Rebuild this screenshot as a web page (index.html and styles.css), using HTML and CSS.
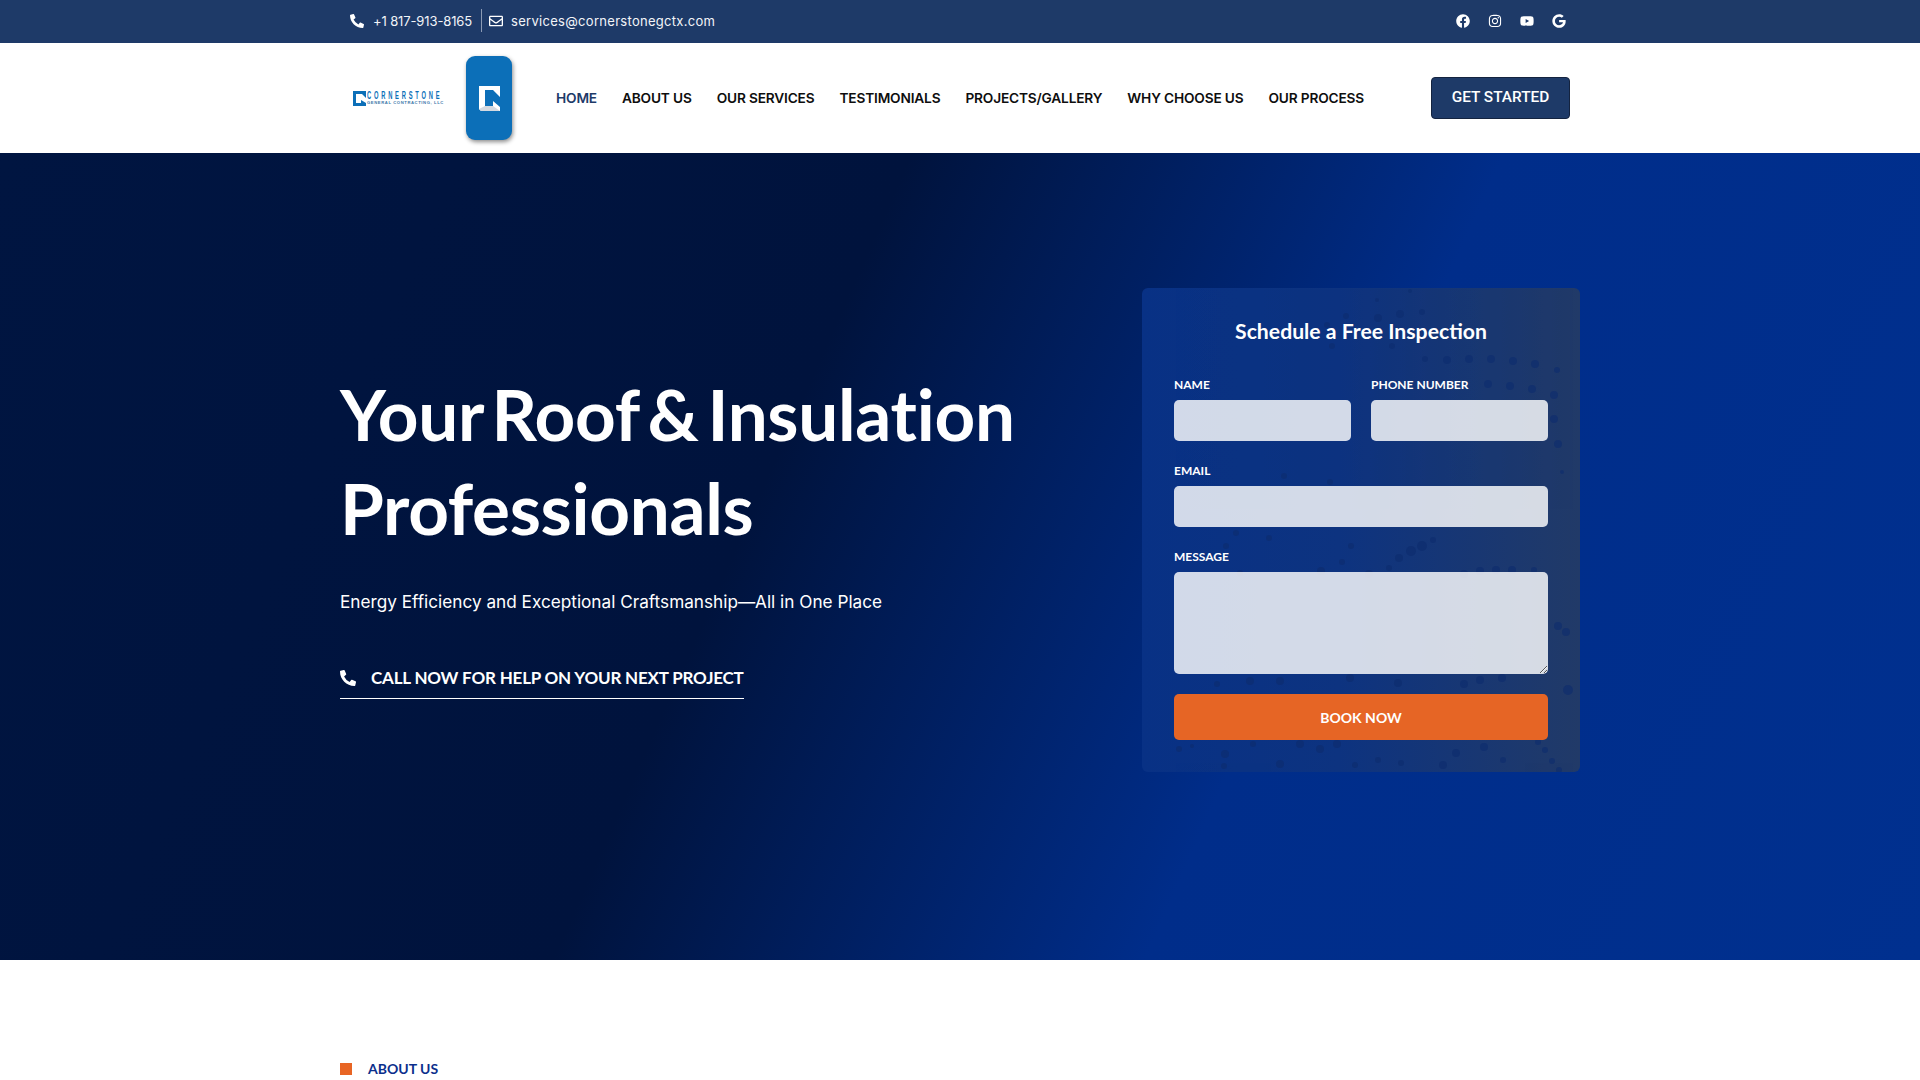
FILE: index.html
```html
<!DOCTYPE html>
<html lang="en">
<head>
  <meta charset="UTF-8" />
  <meta name="viewport" content="width=device-width, initial-scale=1.0" />
  <title>Cornerstone General Contracting</title>
  <link rel="stylesheet" href="styles.css">
</head>
<body>

  <!-- top bar -->
  <div class="topbar">
    <div class="topbar-in">
      <div class="contact">
        <a class="contact-item item-phone" href="#">
          <svg class="ic-phone" viewBox="0 0 512 512"><path d="M497.39 361.8l-112-48a24 24 0 0 0-28 6.9l-49.6 60.6A370.66 370.66 0 0 1 130.6 204.11l60.6-49.6a23.94 23.94 0 0 0 6.9-28l-48-112A24.16 24.16 0 0 0 122.6.61l-104 24A24 24 0 0 0 0 48c0 256.5 207.9 464 464 464a24 24 0 0 0 23.4-18.6l24-104a24.29 24.29 0 0 0-14.01-27.6z"/></svg>
          +1 817-913-8165
        </a>
        <span class="divider"></span>
        <a class="contact-item item-mail" href="#">
          <svg class="ic-mail" viewBox="0 0 512 512"><path d="M464 64H48C21.49 64 0 85.49 0 112v288c0 26.51 21.49 48 48 48h416c26.51 0 48-21.49 48-48V112c0-26.51-21.49-48-48-48zm0 48v40.805c-22.422 18.259-58.168 46.651-134.587 106.49-16.841 13.247-50.201 45.072-73.413 44.701-23.208.375-56.579-31.459-73.413-44.701C106.18 199.465 70.425 171.067 48 152.805V112h416zM48 400V214.398c22.914 18.251 55.409 43.862 104.938 82.646 21.857 17.205 60.134 55.186 103.062 54.955 42.717.231 80.509-37.199 103.053-54.947 49.528-38.783 82.032-64.401 104.947-82.653V400H48z"/></svg>
          services@cornerstonegctx.com
        </a>
      </div>
      <div class="socials">
        <svg viewBox="0 0 512 512"><path d="M504 256C504 119 393 8 256 8S8 119 8 256c0 123.78 90.69 226.38 209.25 245V327.69h-63V256h63v-54.64c0-62.15 37-96.48 93.67-96.48 27.14 0 55.52 4.84 55.52 4.84v61h-31.28c-30.8 0-40.41 19.12-40.41 38.73V256h68.78l-11 71.69h-57.78V501C413.31 482.38 504 379.78 504 256z"/></svg>
        <svg viewBox="0 0 448 512"><path d="M224.1 141c-63.6 0-114.9 51.3-114.9 114.9s51.3 114.9 114.9 114.9S339 319.5 339 255.9 287.7 141 224.1 141zm0 189.6c-41.1 0-74.7-33.5-74.7-74.7s33.5-74.7 74.7-74.7 74.7 33.5 74.7 74.7-33.6 74.7-74.7 74.7zm146.4-194.3c0 14.9-12 26.8-26.8 26.8-14.9 0-26.8-12-26.8-26.8s12-26.8 26.8-26.8 26.8 12 26.8 26.8zm76.1 27.2c-1.7-35.9-9.9-67.7-36.2-93.9-26.2-26.2-58-34.4-93.9-36.2-37-2.1-147.9-2.1-184.9 0-35.8 1.7-67.6 9.9-93.9 36.1s-34.4 58-36.2 93.9c-2.1 37-2.1 147.9 0 184.9 1.7 35.9 9.9 67.7 36.2 93.9s58 34.4 93.9 36.2c37 2.1 147.9 2.1 184.9 0 35.9-1.7 67.7-9.9 93.9-36.2 26.2-26.2 34.4-58 36.2-93.9 2.1-37 2.1-147.8 0-184.8zM398.8 388c-7.8 19.6-22.9 34.7-42.6 42.6-29.5 11.7-99.5 9-132.1 9s-102.7 2.6-132.1-9c-19.6-7.8-34.7-22.9-42.6-42.6-11.7-29.5-9-99.5-9-132.1s-2.6-102.7 9-132.1c7.8-19.6 22.9-34.7 42.6-42.6 29.5-11.7 99.5-9 132.1-9s102.7-2.6 132.1 9c19.6 7.8 34.7 22.9 42.6 42.6 11.7 29.5 9 99.5 9 132.1s2.7 102.7-9 132.1z"/></svg>
        <svg viewBox="0 0 576 512"><path d="M549.655 124.083c-6.281-23.65-24.787-42.276-48.284-48.597C458.781 64 288 64 288 64S117.22 64 74.629 75.486c-23.497 6.322-42.003 24.947-48.284 48.597-11.412 42.867-11.412 132.305-11.412 132.305s0 89.438 11.412 132.305c6.281 23.65 24.787 41.5 48.284 47.821C117.22 448 288 448 288 448s170.78 0 213.371-11.486c23.497-6.321 42.003-24.171 48.284-47.821 11.412-42.867 11.412-132.305 11.412-132.305s0-89.438-11.412-132.305zm-317.51 213.508V175.185l142.739 81.205-142.739 81.201z"/></svg>
        <svg viewBox="0 0 488 512"><path d="M488 261.8C488 403.3 391.1 504 248 504 110.8 504 0 393.2 0 256S110.8 8 248 8c66.8 0 123 24.5 166.3 64.9l-67.5 64.9C258.5 52.6 94.3 116.6 94.3 256c0 86.5 69.1 156.6 153.7 156.6 98.2 0 135-70.4 140.8-106.9H248v-85.3h236.1c2.3 12.7 3.9 24.9 3.9 41.4z"/></svg>
      </div>
    </div>
  </div>

  <!-- header -->
  <header class="header">
    <div class="header-in">
      <a class="logo" href="#">
        <svg class="logo-mark" viewBox="0 0 13 15"><path d="M0 0H13V7L9 3H3V12H8V9L13 12V15H0Z" fill="#0c6fb8"/></svg>
        <span class="logo-words">
          <span class="logo-name">CORNERSTONE</span>
          <span class="logo-sub">GENERAL CONTRACTING, LLC</span>
        </span>
      </a>
      <div class="app-tile">
        <svg viewBox="0 0 21 25"><path d="M0 0H21V11L14 4H6V20H14V15L21 21V25H2L0 23Z" fill="#fff"/><path d="M0 23L6 20H14L21 25H2Z" fill="#d4d9e0"/></svg>
      </div>
      <nav class="nav">
        <a class="active" href="#">HOME</a>
        <a href="#">ABOUT US</a>
        <a href="#">OUR SERVICES</a>
        <a href="#">TESTIMONIALS</a>
        <a href="#">PROJECTS/GALLERY</a>
        <a href="#">WHY CHOOSE US</a>
        <a href="#">OUR PROCESS</a>
      </nav>
      <a class="btn-start" href="#">GET STARTED</a>
    </div>
  </header>

  <!-- hero -->
  <section class="hero">
    <div class="hero-in">
      <div class="hero-left">
        <h1>Your Roof &amp; Insulation Professionals</h1>
        <p>Energy Efficiency and Exceptional Craftsmanship—All in One Place</p>
        <a class="call" href="#">
          <svg viewBox="0 0 512 512"><path d="M497.39 361.8l-112-48a24 24 0 0 0-28 6.9l-49.6 60.6A370.66 370.66 0 0 1 130.6 204.11l60.6-49.6a23.94 23.94 0 0 0 6.9-28l-48-112A24.16 24.16 0 0 0 122.6.61l-104 24A24 24 0 0 0 0 48c0 256.5 207.9 464 464 464a24 24 0 0 0 23.4-18.6l24-104a24.29 24.29 0 0 0-14.01-27.6z"/></svg>
          CALL NOW FOR HELP ON YOUR NEXT PROJECT
        </a>
      </div>

      <form class="quote">
        <!-- speckle behind the fields -->
        <svg class="speckle" viewBox="0 0 438 484" fill="#0d2c6e">
          <circle cx="204" cy="28" r="3"/><circle cx="235" cy="12" r="2"/><circle cx="268" cy="3" r="2"/>
          <circle cx="236" cy="30" r="4"/><circle cx="258" cy="26" r="4"/><circle cx="280" cy="24" r="3"/>
          <circle cx="185" cy="37" r="3"/><circle cx="190" cy="58" r="3"/><circle cx="250" cy="58" r="3"/>
          <circle cx="283" cy="71" r="3"/><circle cx="305" cy="72" r="4"/><circle cx="327" cy="71" r="4"/>
          <circle cx="349" cy="71" r="4"/><circle cx="371" cy="73" r="4"/><circle cx="393" cy="76" r="4"/>
          <circle cx="415" cy="82" r="3"/><circle cx="346" cy="96" r="4"/><circle cx="368" cy="98" r="4"/>
          <circle cx="390" cy="101" r="4"/><circle cx="412" cy="107" r="4"/><circle cx="412" cy="131" r="4"/>
          <circle cx="416" cy="156" r="4"/><circle cx="420" cy="184" r="2"/><circle cx="142" cy="188" r="3"/>
          <circle cx="188" cy="194" r="3"/><circle cx="94" cy="245" r="3"/><circle cx="127" cy="250" r="3"/>
          <circle cx="84" cy="258" r="3"/><circle cx="209" cy="258" r="3"/><circle cx="257" cy="270" r="4"/>
          <circle cx="269" cy="263" r="5"/><circle cx="280" cy="258" r="5"/><circle cx="291" cy="252" r="3"/>
          <circle cx="200" cy="274" r="3"/><circle cx="247" cy="280" r="3"/><circle cx="98" cy="285" r="3"/>
          <circle cx="179" cy="283" r="4"/><circle cx="227" cy="286" r="4"/><circle cx="322" cy="286" r="4"/>
          <circle cx="338" cy="283" r="4"/><circle cx="354" cy="282" r="4"/><circle cx="370" cy="282" r="4"/>
          <circle cx="392" cy="282" r="3"/>
          <circle cx="416" cy="338" r="4"/><circle cx="424" cy="344" r="4"/><circle cx="426" cy="402" r="5"/>
          <circle cx="75" cy="396" r="3"/><circle cx="108" cy="393" r="4"/><circle cx="138" cy="393" r="4"/>
          <circle cx="208" cy="390" r="4"/><circle cx="256" cy="395" r="4"/><circle cx="322" cy="396" r="4"/>
          <circle cx="338" cy="392" r="4"/><circle cx="360" cy="390" r="4"/>
          <circle cx="37" cy="461" r="3"/><circle cx="50" cy="458" r="2"/><circle cx="82" cy="478" r="3"/>
          <circle cx="83" cy="466" r="4"/><circle cx="111" cy="456" r="3"/>
          <circle cx="138" cy="476" r="4"/><circle cx="158" cy="456" r="4"/><circle cx="178" cy="461" r="4"/>
          <circle cx="195" cy="456" r="4"/><circle cx="213" cy="477" r="3"/><circle cx="236" cy="472" r="3"/>
          <circle cx="259" cy="475" r="3"/><circle cx="301" cy="477" r="4"/><circle cx="314" cy="465" r="4"/>
          <circle cx="342" cy="459" r="4"/><circle cx="361" cy="472" r="3"/><circle cx="396" cy="454" r="3"/>
          <circle cx="403" cy="462" r="3"/><circle cx="410" cy="473" r="3"/><circle cx="417" cy="482" r="3"/>
        </svg>
        <h3>Schedule a Free Inspection</h3>
        <div class="row-2">
          <label class="field">NAME<input type="text"></label>
          <label class="field">PHONE NUMBER<input type="tel"></label>
        </div>
        <label class="field">EMAIL<input type="email"></label>
        <label class="field">MESSAGE<textarea></textarea></label>
        <button class="btn-book" type="button">BOOK NOW</button>
      </form>
    </div>
  </section>

  <!-- about -->
  <section class="about">
    <div class="tag"><span class="tag-box"></span>ABOUT US</div>
  </section>

</body>
</html>
```

FILE: styles.css
```css
/* base */
*{box-sizing:border-box;}
html,body{margin:0;padding:0;}
body{font-family:"Inter","Liberation Sans",sans-serif;background:#fff;color:#111;overflow-x:hidden;}
a{color:inherit;text-decoration:none;}

/* top bar */
.topbar{height:43px;background:#1e3a68;color:#fff;}
.topbar-in{width:1220px;height:100%;margin:0 auto;padding-bottom:2px;display:flex;align-items:center;justify-content:space-between;}
.contact{display:flex;align-items:center;font-size:13px;color:#f2f4f8;}
.contact-item{display:flex;align-items:center;gap:9px;}
.contact-item svg{fill:#fff;}
.item-phone{letter-spacing:-.12px;}
.item-mail{letter-spacing:.29px;gap:8px;}
.ic-phone{width:14px;height:14px;}
.ic-mail{width:14px;height:14px;}
.divider{width:1px;height:23px;background:#8b9ab4;margin:0 7px 0 9px;}
.socials{display:flex;align-items:center;gap:18px;margin-right:4px;}
.socials svg{width:14px;height:14px;fill:#fff;}

/* header */
.header{height:110px;background:#fff;}
.header-in{width:1240px;height:100%;margin:0 auto;display:flex;align-items:center;padding-right:10px;}
.logo{display:flex;align-items:center;gap:1px;margin-left:13px;width:113px;}
.logo-mark{width:13px;height:15px;flex:none;}
.logo-words{display:flex;flex-direction:column;line-height:1;color:#0c6fb8;font-family:"Liberation Sans",sans-serif;white-space:nowrap;}
.logo-name{display:block;font-size:10.5px;font-weight:700;letter-spacing:5.05px;transform:scaleX(.55);transform-origin:left;line-height:9px;}
.logo-sub{display:block;font-size:4.2px;font-weight:700;letter-spacing:.58px;margin-top:1px;color:#3d78aa;line-height:4px;}
.app-tile{width:46px;height:84px;background:#0c6fb8;border-radius:9px;box-shadow:1px 2px 4px rgba(0,0,0,.45);display:flex;align-items:center;justify-content:center;}
.app-tile svg{width:21px;height:25px;}
.nav{display:flex;align-items:center;gap:25px;margin-left:44px;margin-bottom:1px;font-size:13.7px;font-weight:600;color:#0e0e0e;letter-spacing:-.17px;}
.nav a.active{color:#1e3a68;}
.btn-start{margin-left:auto;width:139px;height:42px;padding-bottom:2px;display:flex;align-items:center;justify-content:center;background:#1e3a68;border:1px solid #14233f;border-radius:4px;color:#fff;font-family:"Roboto",sans-serif;font-size:15.4px;font-weight:500;}

/* hero */
.hero{height:807px;background:linear-gradient(114deg,#001541 0%,#00133d 40%,#002d8a 66%,#00308f 100%);color:#fff;}
.hero-in{width:1240px;height:100%;margin:0 auto;padding-top:135px;display:flex;align-items:flex-start;justify-content:space-between;}
.hero-left{width:720px;padding-top:79px;}
.hero-left h1{margin:0;font-family:"Lato",sans-serif;font-size:71px;font-weight:700;line-height:94px;letter-spacing:-.3px;word-spacing:-8px;}
.hero-left p{margin:34px 0 0;font-size:17.2px;line-height:26px;}
.call{display:inline-flex;align-items:center;gap:15px;margin-top:52px;padding-bottom:10px;border-bottom:1px solid #fff;font-family:"Lato",sans-serif;font-size:17px;font-weight:700;letter-spacing:-.19px;}
.call svg{width:16px;height:16px;fill:#fff;}

/* form */
.quote{position:relative;width:438px;height:484px;padding:27px 32px 32px;border-radius:6px;background:linear-gradient(90deg,#083185 0%,#0d3380 45%,#213a68 100%);overflow:hidden;}
.speckle{position:absolute;left:0;top:0;width:438px;height:484px;opacity:.6;}
.quote h3,.quote label,.quote button{position:relative;}
.quote h3{margin:0 0 29px;text-align:center;font-family:"Lato",sans-serif;font-size:21.2px;font-weight:700;line-height:32px;}
.row-2{display:grid;grid-template-columns:1fr 1fr;gap:20px;}
.field{display:block;margin-bottom:21px;font-family:"Lato",sans-serif;font-size:12px;font-weight:700;line-height:17px;}
.field input,.field textarea{display:block;width:100%;height:41px;margin-top:7px;border:0;border-radius:5px;background:rgba(255,255,255,.82);}
.field textarea{height:102px;resize:vertical;}
.btn-book{display:block;width:100%;height:46px;margin-top:-1px;border:0;border-radius:5px;background:#e66525;color:#fff;font-family:"Lato",sans-serif;font-size:14px;font-weight:700;}

/* about */
.about{height:120px;background:#fff;}
.tag{width:1240px;margin:0 auto;padding-top:100px;display:flex;align-items:center;gap:16px;font-family:"Lato",sans-serif;font-size:14px;font-weight:700;line-height:18px;color:#0b2f8c;}
.tag-box{width:12px;height:12px;background:#e86524;}
```
